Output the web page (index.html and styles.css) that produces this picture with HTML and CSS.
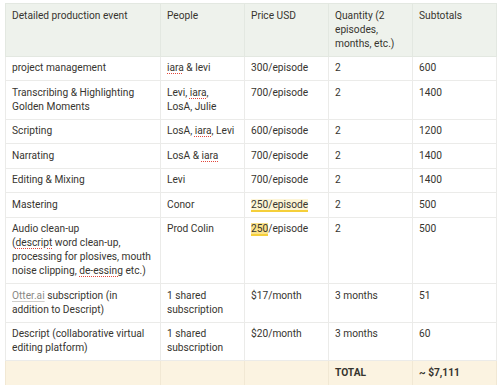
FILE: index.html
```html
<!DOCTYPE html>
<html lang="en">
<head>
  <meta charset="UTF-8" />
  <title>Production budget</title>
  <link rel="stylesheet" href="styles.css">
</head>
<body>
  <table class="budget">
    <colgroup>
      <col class="c-event">
      <col class="c-people">
      <col class="c-price">
      <col class="c-qty">
      <col class="c-sub">
    </colgroup>
    <thead>
      <tr>
        <th>Detailed production event</th>
        <th>People</th>
        <th>Price USD</th>
        <th>Quantity (2 episodes, months, etc.)</th>
        <th>Subtotals</th>
      </tr>
    </thead>
    <tbody>
      <tr>
        <td>project management</td>
        <td><span class="typo">iara</span> &amp; levi</td>
        <td>300/episode</td>
        <td>2</td>
        <td>600</td>
      </tr>
      <tr>
        <td>Transcribing &amp; Highlighting Golden Moments</td>
        <td>Levi, <span class="typo">iara</span>,<br>LosA, Julie</td>
        <td>700/episode</td>
        <td>2</td>
        <td>1400</td>
      </tr>
      <tr>
        <td>Scripting</td>
        <td>LosA, <span class="typo">iara</span>, Levi</td>
        <td>600/episode</td>
        <td>2</td>
        <td>1200</td>
      </tr>
      <tr>
        <td>Narrating</td>
        <td>LosA &amp; <span class="typo">iara</span></td>
        <td>700/episode</td>
        <td>2</td>
        <td>1400</td>
      </tr>
      <tr>
        <td>Editing &amp; Mixing</td>
        <td>Levi</td>
        <td>700/episode</td>
        <td>2</td>
        <td>1400</td>
      </tr>
      <tr>
        <td>Mastering</td>
        <td>Conor</td>
        <td><span class="comment">250/episode</span></td>
        <td>2</td>
        <td>500</td>
      </tr>
      <tr>
        <td>Audio clean-up<br>(<span class="typo">descript</span> word clean-up,<br>processing for plosives, mouth<br>noise clipping, <span class="typo">de-essing</span> etc.)</td>
        <td>Prod Colin</td>
        <td><span class="comment strong">250</span>/episode</td>
        <td>2</td>
        <td>500</td>
      </tr>
      <tr>
        <td><span class="link">Otter.ai</span> subscription (in addition to Descript)</td>
        <td>1 shared subscription</td>
        <td>$17/month</td>
        <td>3 months</td>
        <td>51</td>
      </tr>
      <tr>
        <td>Descript (collaborative virtual editing platform)</td>
        <td>1 shared subscription</td>
        <td>$20/month</td>
        <td>3 months</td>
        <td>60</td>
      </tr>
      <tr class="total">
        <td></td>
        <td></td>
        <td></td>
        <td><b>TOTAL</b></td>
        <td><b>~ $7,111</b></td>
      </tr>
    </tbody>
  </table>
</body>
</html>
```
FILE: styles.css
```css
html, body {
  margin: 0;
  padding: 0;
  background: #fff;
  color: #37352f;
  font-family: Roboto, "Liberation Sans", sans-serif;
  font-size: 10.2px;
}

.budget {
  margin: 3px 0 0 5px;
  width: 491px;
  border-collapse: collapse;
  table-layout: fixed;
}

.c-event { width: 155px; }
.c-people { width: 84px; }
.c-price { width: 84px; }
.c-qty { width: 84px; }
.c-sub { width: 84px; }

.budget th,
.budget td {
  border: 1px solid #ebebe9;
  padding: 4.5px 5px 5px 6px;
  line-height: 14px;
  text-align: left;
  vertical-align: top;
  font-weight: normal;
  white-space: normal;
}

.budget th {
  background: #eef2ec;
  border-color: #e3e8e1;
}

.total td {
  background: #fbf3e1;
  border-color: #f1e8d4;
}

.total b {
  font-weight: 700;
}

.typo {
  text-decoration: underline dotted #e2483d;
  text-decoration-thickness: 1px;
  text-underline-offset: 2px;
}

.link {
  color: #8a8985;
  text-decoration: underline;
  text-decoration-color: #cfcecb;
  text-underline-offset: 2px;
}

.comment {
  background: #fdf5d6;
  border-bottom: 2px solid #f5cf3a;
}

.comment.strong {
  background: #fbe28a;
}
```
